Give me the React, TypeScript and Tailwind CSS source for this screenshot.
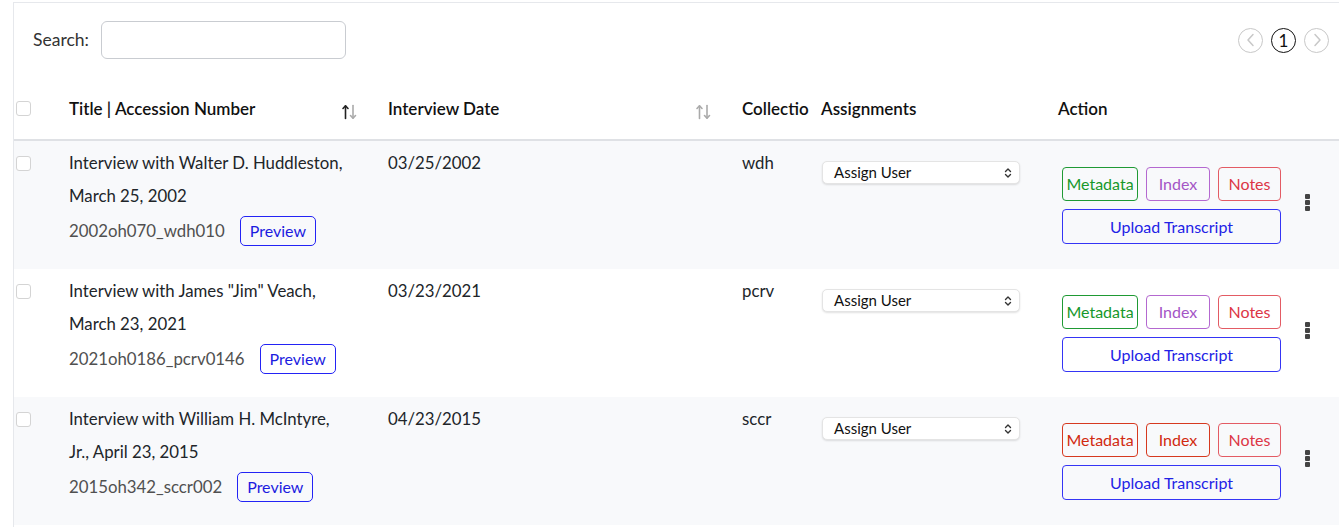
import React from "react";

const rows = [
  {
    title: ["Interview with Walter D. Huddleston,", "March 25, 2002"],
    accession: "2002oh070_wdh010",
    date: "03/25/2002",
    collection: "wdh",
    done: false,
  },
  {
    title: ['Interview with James "Jim" Veach,', "March 23, 2021"],
    accession: "2021oh0186_pcrv0146",
    date: "03/23/2021",
    collection: "pcrv",
    done: false,
  },
  {
    title: ["Interview with William H. McIntyre,", "Jr., April 23, 2015"],
    accession: "2015oh342_sccr002",
    date: "04/23/2015",
    collection: "sccr",
    done: true,
  },
];

const cols = "grid grid-cols-[42px_320px_354px_79px_237px_1fr]";

function SortIcon({ active }: { active?: boolean }) {
  return (
    <svg width="17" height="16" viewBox="0 0 17 16" className="shrink-0">
      <g strokeWidth="1.6" fill="none" strokeLinecap="round" strokeLinejoin="round">
        <g stroke={active ? "#222" : "#aaa"}>
          <path d="M4.5 14.5V2" />
          <path d="M2 4.5l2.5-2.7 2.5 2.7" />
        </g>
        <g stroke="#aaa">
          <path d="M12 1.5V14" />
          <path d="M9.5 11.5l2.5 2.7 2.5-2.7" />
        </g>
      </g>
    </svg>
  );
}

function Checkbox() {
  return <span className="block w-[15px] h-[15px] rounded-[3px] border border-[#d4d4d4] bg-white" />;
}

function Circle({ children, muted }: { children: React.ReactNode; muted?: boolean }) {
  return (
    <span
      className={`flex items-center justify-center w-[25px] h-[25px] rounded-full border-[1.5px] ${
        muted ? "border-[#c8c8c8] text-[#c8c8c8]" : "border-[#111] text-[#111]"
      }`}
    >
      {children}
    </span>
  );
}

function Chevron({ dir }: { dir: "left" | "right" }) {
  return (
    <svg width="12" height="14" viewBox="0 0 12 14" fill="none" stroke="currentColor" strokeWidth="1.5" strokeLinecap="round" strokeLinejoin="round">
      {dir === "left" ? <path d="M8 1.5L3 7l5 5.5" /> : <path d="M4 1.5L9 7l-5 5.5" />}
    </svg>
  );
}

function Kebab() {
  return (
    <div className="flex flex-col gap-[1px]">
      <span className="block w-[5px] h-[5px] rounded-[1px] bg-[#444]" />
      <span className="block w-[5px] h-[5px] rounded-[1px] bg-[#444]" />
      <span className="block w-[5px] h-[5px] rounded-[1px] bg-[#444]" />
    </div>
  );
}

export default function App() {
  return (
    <div className="w-[1339px] h-[527px] bg-white overflow-hidden font-['Lato','Noto_Sans',sans-serif] text-[#212529]">
      <div className="ml-[13px] mt-[2px] border-l border-t border-[#e6e8ec] h-full">
        {/* Search + pager */}
        <div className="flex items-center justify-between pt-[18px] pr-[10px]">
          <label className="flex items-center gap-[12px] pl-[19px] text-[17.5px] text-[#333]">
            Search:
            <input className="w-[245px] h-[38px] rounded-[6px] border border-[#c9ccd1] bg-white" />
          </label>
          <div className="flex items-center gap-[8px]">
            <Circle muted>
              <Chevron dir="left" />
            </Circle>
            <Circle>
              <span className="text-[17px] leading-none">1</span>
            </Circle>
            <Circle muted>
              <Chevron dir="right" />
            </Circle>
          </div>
        </div>

        {/* Header */}
        <div className={`${cols} mt-[19px] h-[63px] items-center border-b-2 border-[#dfe1e5] font-semibold text-[17px] text-[#111]`}>
          <div className="pl-[2px] -mt-[1px]">
            <Checkbox />
          </div>
          <div className="flex items-center justify-between pl-[13px] pr-[18px]">
            <span>Title | Accession Number</span>
            <span className="mt-[6px]">
              <SortIcon active />
            </span>
          </div>
          <div className="flex items-center justify-between pl-[12px] pr-[18px]">
            <span>Interview Date</span>
            <span className="mt-[6px]">
              <SortIcon />
            </span>
          </div>
          <div className="pl-[12px] pr-[6px] overflow-hidden whitespace-nowrap">Collection</div>
          <div className="pl-[12px]">Assignments</div>
          <div className="pl-[12px]">Action</div>
        </div>

        {/* Rows */}
        {rows.map((row, i) => (
          <div
            key={i}
            className={`${cols} h-[128px] text-[16.8px] ${i % 2 === 0 ? "bg-[#f8f9fb]" : "bg-white"}`}
          >
            <div className="pl-[2px] pt-[15px]">
              <Checkbox />
            </div>
            <div className="pl-[13px] pr-[10px] pt-[5px]">
              {row.title.map((line) => (
                <div key={line} className="leading-[33px] whitespace-nowrap">
                  {line}
                </div>
              ))}
              <div className="flex items-center gap-[15px] mt-[4px]">
                <span className="text-[#505050]">{row.accession}</span>
                <button className="h-[30px] px-[9px] rounded-[5px] border border-[#2323f5] text-[#1c1ce0] text-[16px] bg-transparent">
                  Preview
                </button>
              </div>
            </div>
            <div className="pl-[12px] pt-[5px] leading-[33px]">{row.date}</div>
            <div className="pl-[12px] pt-[5px] leading-[33px]">{row.collection}</div>
            <div className="pl-[13px] pt-[20px]">
              <div className="flex items-center justify-between w-[198px] h-[23px] pl-[11px] pr-[7px] rounded-[5px] bg-white border border-[#e4e4e4] shadow-[0_1px_2px_rgba(0,0,0,0.12)] text-[15px] text-[#111]">
                <span>Assign User</span>
                <svg width="8" height="12" viewBox="0 0 8 12" fill="none" stroke="#333" strokeWidth="1.4" strokeLinecap="round" strokeLinejoin="round">
                  <path d="M1.5 4.5L4 2l2.5 2.5" />
                  <path d="M1.5 7.5L4 10l2.5-2.5" />
                </svg>
              </div>
            </div>
            <div className="flex items-center pl-[16px] pt-[25px] pb-[24px] self-stretch">
              <div className="flex flex-col gap-[8px] w-[219px] text-[16px]">
                <div className="flex gap-[8px]">
                  <button
                    className={`w-[76px] h-[34px] rounded-[4px] border ${
                      row.done ? "border-[#d6391f] text-[#d12a10]" : "border-[#1f9a34] text-[#17982b]"
                    }`}
                  >
                    Metadata
                  </button>
                  <button
                    className={`w-[64px] h-[34px] rounded-[4px] border ${
                      row.done ? "border-[#d6391f] text-[#d12a10]" : "border-[#b468d0] text-[#a455c6]"
                    }`}
                  >
                    Index
                  </button>
                  <button className="w-[63px] h-[34px] rounded-[4px] border border-[#e35b64] text-[#dc3545]">
                    Notes
                  </button>
                </div>
                <button className="w-[219px] h-[35px] rounded-[4px] border border-[#3535f5] text-[#2222e6]">
                  Upload Transcript
                </button>
              </div>
              <div className="ml-[24px] -mt-[6px]">
                <Kebab />
              </div>
            </div>
          </div>
        ))}
      </div>
    </div>
  );
}
